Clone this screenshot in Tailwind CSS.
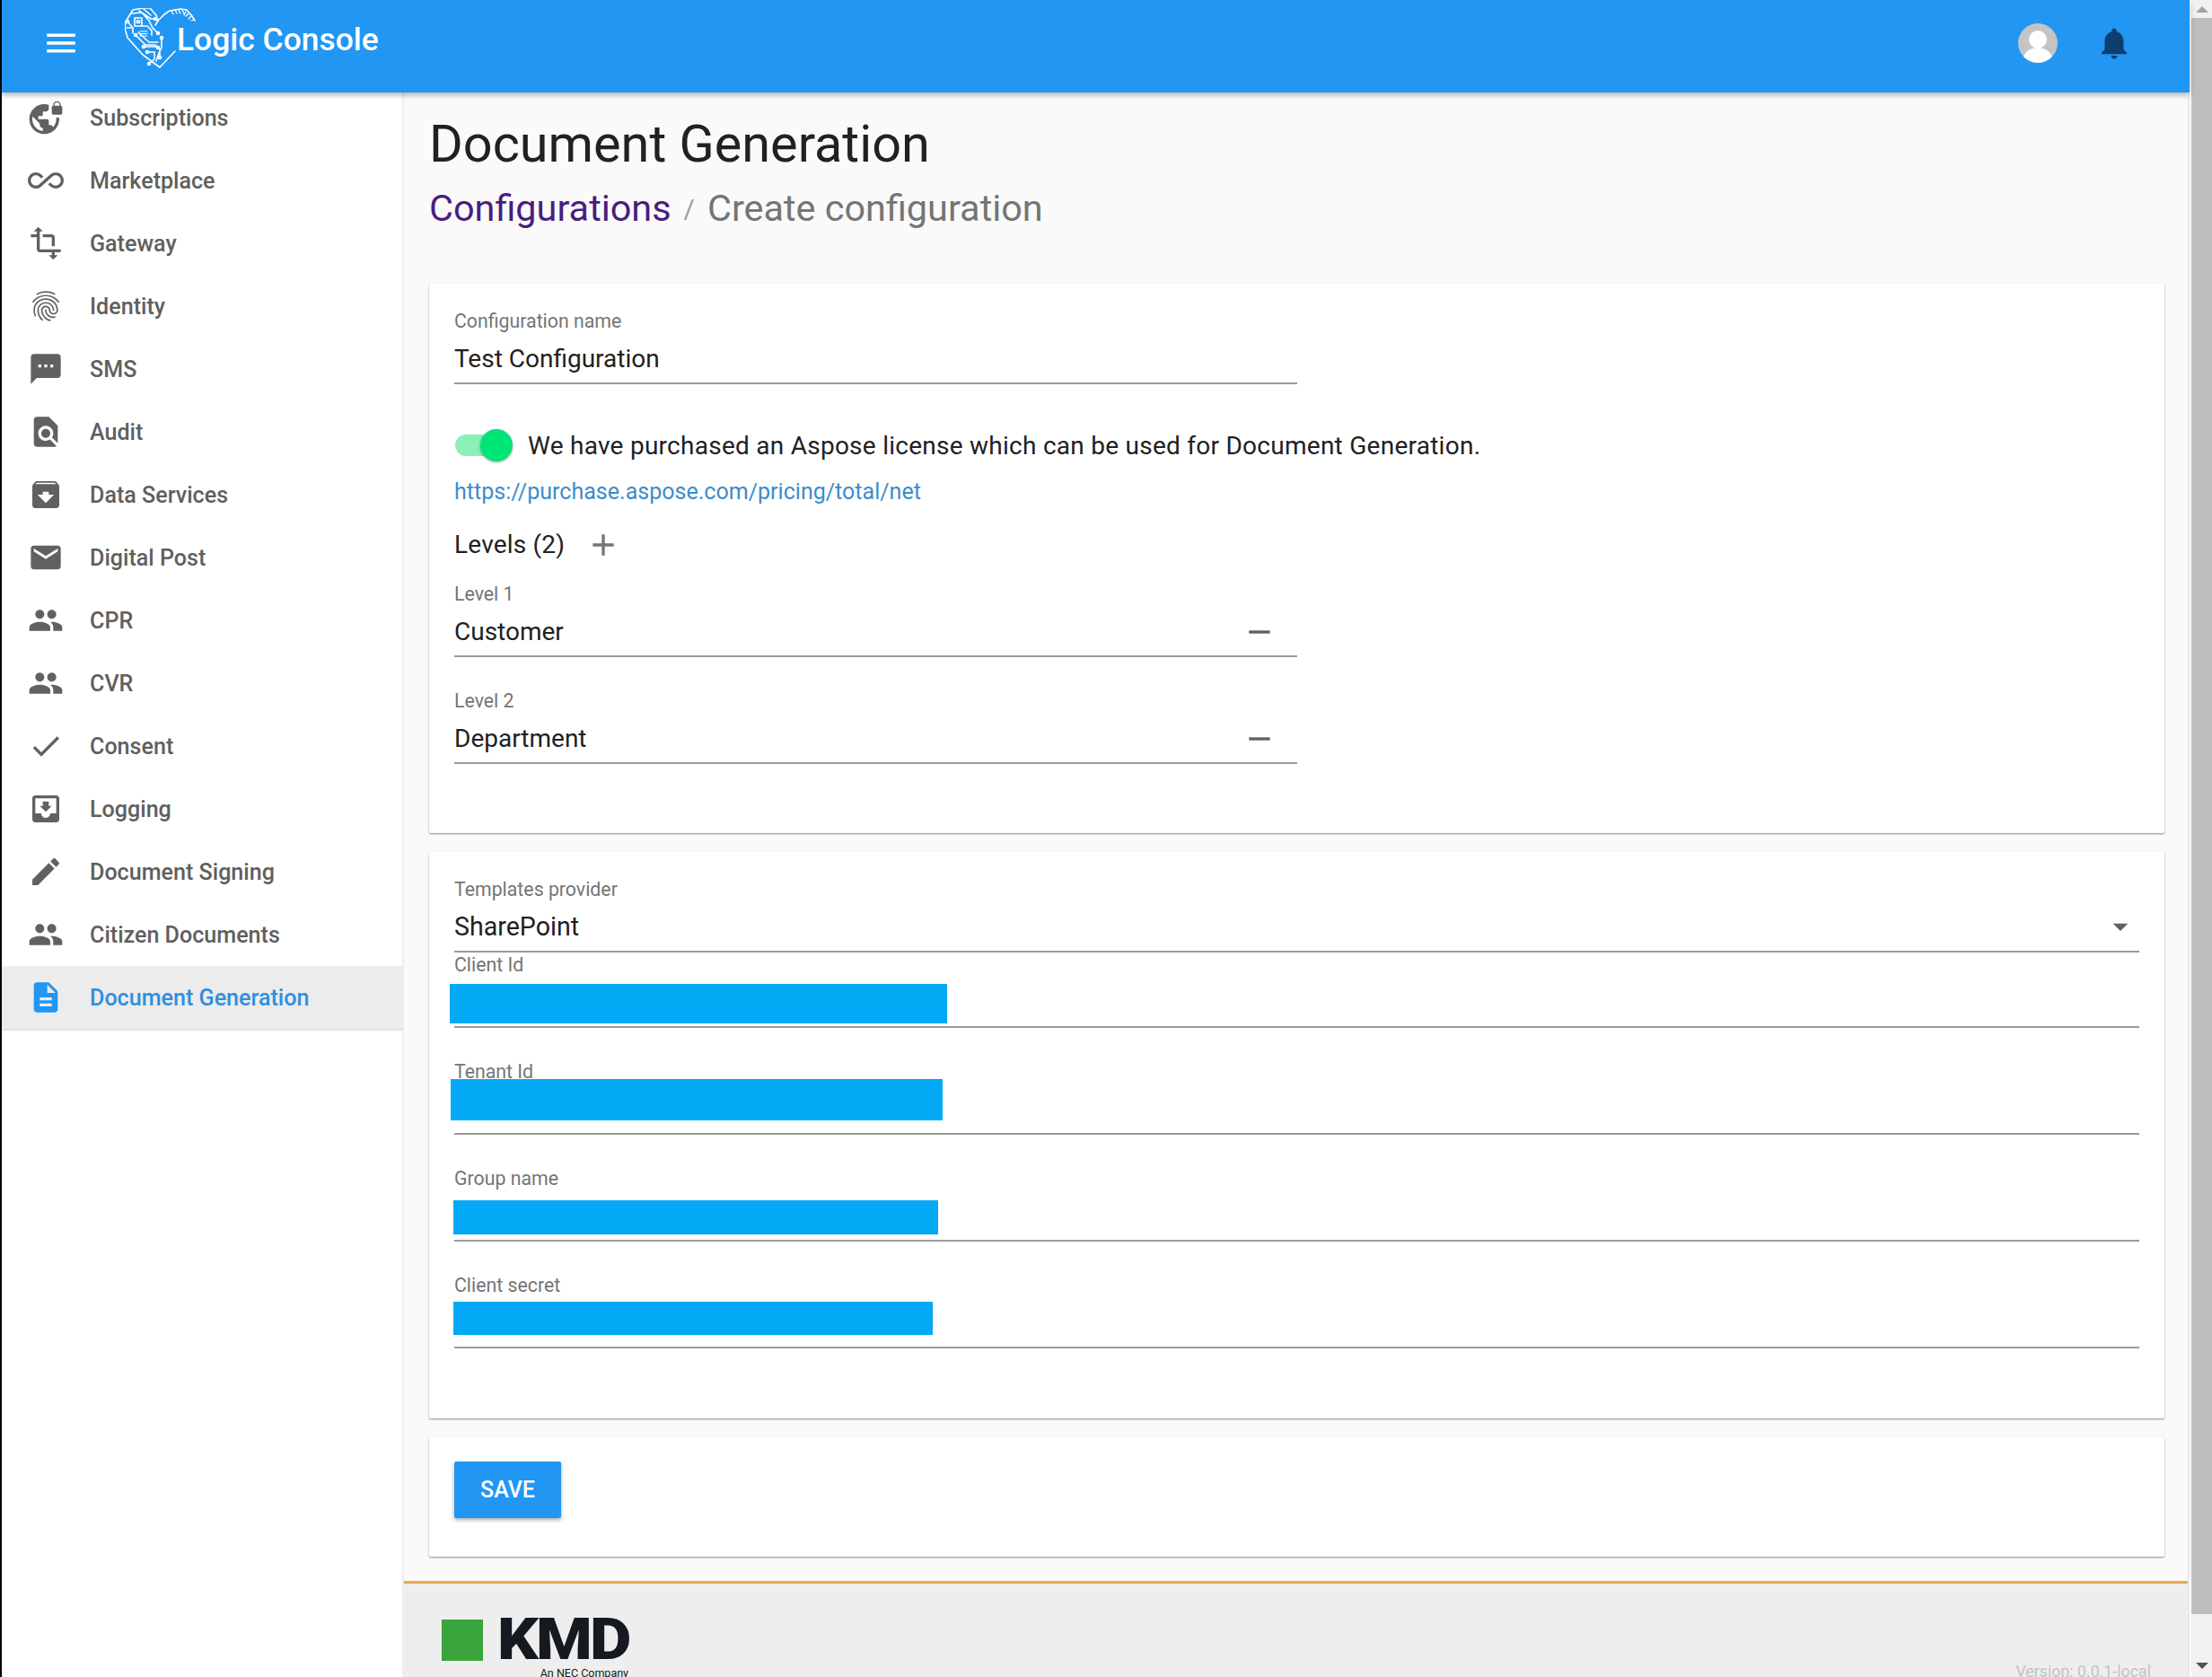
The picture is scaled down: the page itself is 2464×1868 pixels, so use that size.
<!DOCTYPE html>
<html lang="en">
<head>
  <meta charset="UTF-8" />
  <title>Logic Console</title>
  <script src="https://cdn.jsdelivr.net/npm/@tailwindcss/browser@4"></script>
</head>
<body class="font-['Roboto',sans-serif] bg-white">
<div class="flex h-[1868px] w-[2464px] overflow-hidden">
  <div class="w-[2px] shrink-0 bg-black"></div>

  <div class="w-[2437px] shrink-0 flex flex-col">
    <!-- Top bar -->
    <header class="relative z-10 h-[103px] shrink-0 pb-[8px] bg-[#2196f3] shadow-[0_3px_6px_rgba(0,0,0,0.3)] flex items-center">
      <svg class="w-[42px] h-[42px] ml-[45px] fill-white" viewBox="0 0 24 24"><path d="M3 18h18v-2H3v2zm0-5h18v-2H3v2zm0-7v2h18V6H3z"/></svg>
      <svg class="w-[80px] h-[68px] ml-[50px] -mt-[9px] shrink-0" viewBox="0 0 80 68" fill="none" stroke="white" stroke-width="1.6" stroke-linecap="round" stroke-linejoin="round">
        <path d="M39 66L20 52 3 33 0 22 1 15 9 2 20 0 28 0 35 8 37 14 34 19"/>
        <path d="M36 15L44 7 50 3 62 1 69 2 75 9 78 14"/>
        <path d="M39 66L56 48"/>
        <path d="M52 3l2 4M56 2l2 4M60 2l2 4M64 2l2 4M68 4l-2 4M71 6l-3 3M74 9l-3 3M77 13l-3 1" stroke-width="1.2"/>
        <path d="M11 11h8v9h-8zM13.5 14h3v2.5h-3z"/>
        <path d="M16 3l13 9h5M21 1l8 7M7 6l12-1 8 9 4 8 6 6"/>
        <path d="M3 15l6 7 0 6M2 22h5M19 20l6 0 5 5 0 5"/>
        <path d="M17 26h8M17 28.500h8M17 31h8" stroke-width="1.2"/>
        <path d="M12 30l11 11h11l3 3M15 27l12 11h10M21 43l15 0 3 3 0 9M25 49l8 0 0 8-6 5M41 33l0 11-3 6 -3 9"/>
        <circle cx="34" cy="12" r="1.5"/><circle cx="3" cy="15" r="1.500"/><circle cx="37" cy="28" r="1.500"/><circle cx="12" cy="30" r="1.500"/><circle cx="41" cy="33" r="1.500"/><circle cx="37" cy="44" r="1.500"/><circle cx="21" cy="43" r="1.500"/><circle cx="39" cy="55" r="1.500"/><circle cx="25" cy="49" r="1.500"/><circle cx="27" cy="62" r="1.500"/>
      </svg>
      <span class="-ml-[22px] -mt-[5px] text-[35.4px] font-medium text-white whitespace-nowrap">Logic Console</span>
      <div class="ml-auto mr-[63px] flex items-center gap-[42px]">
        <svg class="w-[44px] h-[44px]" viewBox="0 0 44 44"><defs><clipPath id="avatarClip"><circle cx="22" cy="22" r="22"/></clipPath></defs><circle cx="22" cy="22" r="22" fill="#c4c4c4"/><g clip-path="url(#avatarClip)" fill="white"><circle cx="22" cy="18" r="10"/><ellipse cx="22" cy="40" rx="16" ry="13"/></g></svg>
        <svg class="w-[42px] h-[42px] fill-[#0c3f70]" viewBox="0 0 24 24"><path d="M12 22c1.1 0 2-.9 2-2h-4c0 1.1.89 2 2 2zm6-6v-5c0-3.07-1.64-5.64-4.500-6.320V4c0-.83-.67-1.500-1.500-1.500s-1.500.67-1.500 1.500v.68C7.630 5.360 6 7.920 6 11v5l-2 2v1h16v-1l-2-2z"/></svg>
      </div>
    </header>

    <div class="flex flex-1 min-h-0">
      <!-- Sidebar -->
      <nav class="w-[448px] shrink-0 -mt-[7px] bg-white border-r-[2px] border-[#eeeeee] text-[25.1px] leading-[32px] font-medium text-[#5f5f5f]">
        <a class="h-[70px] flex items-center"><svg class="w-[40px] h-[40px] mx-[29px] fill-[#616161]" viewBox="0 0 24 24"><path d="M22 4v-.5C22 2.12 20.88 1 19.5 1S17 2.12 17 3.5V4c-.55 0-1 .45-1 1v4c0 .55.45 1 1 1h5c.55 0 1-.45 1-1V5c0-.55-.45-1-1-1zm-.8 0h-3.4v-.5c0-.94.76-1.7 1.7-1.7s1.7.76 1.7 1.7V4zm-2.28 8c.04.33.08.66.08 1 0 2.08-.8 3.97-2.1 5.39-.26-.81-1-1.39-1.9-1.39h-1v-3c0-.55-.45-1-1-1H7v-2h2c.55 0 1-.45 1-1V8h2c1.1 0 2-.9 2-2V3.46c-.95-.3-1.95-.46-3-.46C5.48 3 1 7.48 1 13s4.48 10 10 10 10-4.48 10-10c0-.34-.02-.67-.05-1h-2.03zM10 20.93c-3.95-.49-7-3.85-7-7.93 0-.62.08-1.21.21-1.79L8 16v1c0 1.1.9 2 2 2v1.93z"/></svg><span class="pt-[1px]">Subscriptions</span></a>
        <a class="h-[70px] flex items-center"><svg class="w-[40px] h-[40px] mx-[29px] fill-[#616161]" viewBox="0 0 24 24"><path d="M18.6 6.62c-1.44 0-2.8.56-3.77 1.53L12 10.66 10.48 12h.01L7.8 14.39c-.64.64-1.49.99-2.4.99-1.87 0-3.39-1.51-3.39-3.38S3.53 8.62 5.4 8.62c.91 0 1.76.35 2.44 1.03l1.13 1 1.51-1.34L9.22 8.2C8.2 7.18 6.84 6.62 5.4 6.62 2.42 6.62 0 9.04 0 12s2.42 5.38 5.4 5.38c1.44 0 2.8-.56 3.77-1.53l2.83-2.5.01.01L13.52 12h-.01l2.69-2.39c.64-.64 1.49-.99 2.4-.99 1.87 0 3.39 1.51 3.39 3.38s-1.52 3.38-3.39 3.38c-.9 0-1.76-.35-2.44-1.03l-1.14-1.01-1.51 1.34 1.27 1.12c1.02 1.01 2.37 1.57 3.82 1.57 2.98 0 5.4-2.41 5.4-5.38s-2.42-5.37-5.4-5.37z"/></svg><span class="pt-[1px]">Marketplace</span></a>
        <a class="h-[70px] flex items-center"><svg class="w-[40px] h-[40px] mx-[29px] fill-[#616161]" viewBox="0 0 24 24"><path d="M22 18v-2H8V4h2L7 1 4 4h2v2H2v2h4v8c0 1.1.9 2 2 2h8v2h-2l3 3 3-3h-2v-2h4zM10 8h6v6h2V8c0-1.1-.9-2-2-2h-6v2z"/></svg><span class="pt-[1px]">Gateway</span></a>
        <a class="h-[70px] flex items-center"><svg class="w-[40px] h-[40px] mx-[29px] fill-[#616161]" viewBox="0 0 24 24"><path d="M17.81 4.47c-.08 0-.16-.02-.23-.06C15.66 3.42 14 3 12.01 3c-1.98 0-3.86.47-5.57 1.41-.24.13-.54.04-.68-.2-.13-.24-.04-.55.2-.68C7.82 2.52 9.86 2 12.01 2c2.13 0 3.99.47 6.03 1.52.25.13.34.43.21.67-.09.18-.26.28-.44.28zM3.5 9.72c-.1 0-.2-.03-.29-.09-.23-.16-.28-.47-.12-.7.99-1.4 2.25-2.5 3.75-3.27C9.98 4.04 14 4.03 17.15 5.65c1.5.77 2.76 1.86 3.75 3.25.16.22.11.54-.12.7-.23.16-.54.11-.7-.12-.9-1.26-2.04-2.25-3.39-2.94-2.87-1.47-6.54-1.47-9.4.01-1.36.7-2.5 1.7-3.4 2.96-.08.14-.23.21-.39.21zm6.25 12.07c-.13 0-.26-.05-.35-.15-.87-.87-1.34-1.43-2.01-2.64-.69-1.23-1.05-2.73-1.05-4.34 0-2.97 2.54-5.39 5.66-5.39s5.66 2.42 5.66 5.39c0 .28-.22.5-.5.5s-.5-.22-.5-.5c0-2.42-2.09-4.39-4.66-4.39-2.57 0-4.66 1.97-4.66 4.39 0 1.44.32 2.77.93 3.85.64 1.15 1.08 1.64 1.85 2.42.19.2.19.51 0 .71-.11.1-.24.15-.37.15zm7.17-1.85c-1.19 0-2.24-.3-3.1-.89-1.49-1.01-2.38-2.65-2.38-4.39 0-.28.22-.5.5-.5s.5.22.5.5c0 1.41.72 2.74 1.94 3.56.71.48 1.54.71 2.54.71.24 0 .64-.03 1.04-.1.27-.05.53.13.58.41.05.27-.13.53-.41.58-.57.11-1.07.12-1.21.12zM14.91 22c-.04 0-.09-.01-.13-.02-1.59-.44-2.63-1.03-3.72-2.1-1.4-1.39-2.17-3.24-2.17-5.22 0-1.62 1.38-2.94 3.08-2.94 1.7 0 3.08 1.32 3.08 2.94 0 1.07.93 1.94 2.08 1.94s2.08-.87 2.08-1.94c0-3.77-3.25-6.83-7.25-6.83-2.84 0-5.44 1.58-6.61 4.03-.39.81-.59 1.76-.59 2.8 0 .78.07 2.01.67 3.61.1.26-.03.55-.29.64-.26.1-.55-.04-.64-.29-.49-1.31-.73-2.61-.73-3.96 0-1.2.23-2.29.68-3.24 1.33-2.79 4.28-4.6 7.51-4.6 4.55 0 8.25 3.51 8.25 7.83 0 1.62-1.38 2.94-3.08 2.94s-3.08-1.32-3.08-2.94c0-1.07-.93-1.94-2.08-1.94s-2.08.87-2.08 1.94c0 1.71.66 3.31 1.87 4.51.95.94 1.86 1.46 3.27 1.85.27.07.42.35.35.61-.05.23-.26.38-.47.38z"/></svg><span class="pt-[1px]">Identity</span></a>
        <a class="h-[70px] flex items-center"><svg class="w-[40px] h-[40px] mx-[29px] fill-[#616161]" viewBox="0 0 24 24"><path d="M20 2H4c-1.1 0-1.99.9-1.99 2L2 22l4-4h14c1.1 0 2-.9 2-2V4c0-1.1-.9-2-2-2zM9 11H7V9h2v2zm4 0h-2V9h2v2zm4 0h-2V9h2v2z"/></svg><span class="pt-[1px]">SMS</span></a>
        <a class="h-[70px] flex items-center"><svg class="w-[40px] h-[40px] mx-[29px] fill-[#616161]" viewBox="0 0 24 24"><path d="M20 19.59V8l-6-6H6c-1.1 0-1.99.9-1.99 2L4 20c0 1.1.89 2 1.99 2H18c.45 0 .85-.15 1.19-.4l-4.43-4.43c-.8.52-1.74.83-2.76.83-2.76 0-5-2.24-5-5s2.24-5 5-5 5 2.24 5 5c0 1.02-.31 1.96-.83 2.75L20 19.59zM9 13c0 1.66 1.34 3 3 3s3-1.34 3-3-1.34-3-3-3-3 1.34-3 3z"/></svg><span class="pt-[1px]">Audit</span></a>
        <a class="h-[70px] flex items-center"><svg class="w-[40px] h-[40px] mx-[29px] fill-[#616161]" viewBox="0 0 24 24"><path d="M20.54 5.23l-1.39-1.68C18.88 3.21 18.47 3 18 3H6c-.47 0-.88.21-1.16.55L3.46 5.23C3.17 5.57 3 6.02 3 6.5V19c0 1.1.9 2 2 2h14c1.1 0 2-.9 2-2V6.5c0-.48-.17-.93-.46-1.27zM12 17.5L6.5 12H10v-2h4v2h3.5L12 17.5zM5.12 5l.81-1h12l.94 1H5.12z"/></svg><span class="pt-[1px]">Data Services</span></a>
        <a class="h-[70px] flex items-center"><svg class="w-[40px] h-[40px] mx-[29px] fill-[#616161]" viewBox="0 0 24 24"><path d="M20 4H4c-1.1 0-1.99.9-1.99 2L2 18c0 1.1.9 2 2 2h16c1.1 0 2-.9 2-2V6c0-1.1-.9-2-2-2zm0 4l-8 5-8-5V6l8 5 8-5v2z"/></svg><span class="pt-[1px]">Digital Post</span></a>
        <a class="h-[70px] flex items-center"><svg class="w-[40px] h-[40px] mx-[29px] fill-[#616161]" viewBox="0 0 24 24"><path d="M16 11c1.66 0 2.99-1.34 2.99-3S17.66 5 16 5c-1.66 0-3 1.34-3 3s1.34 3 3 3zm-8 0c1.66 0 2.99-1.34 2.99-3S9.66 5 8 5C6.34 5 5 6.34 5 8s1.34 3 3 3zm0 2c-2.33 0-7 1.17-7 3.5V19h14v-2.5c0-2.33-4.67-3.5-7-3.5zm8 0c-.29 0-.62.02-.97.05 1.16.84 1.97 1.97 1.97 3.45V19h6v-2.5c0-2.33-4.67-3.5-7-3.5z"/></svg><span class="pt-[1px]">CPR</span></a>
        <a class="h-[70px] flex items-center"><svg class="w-[40px] h-[40px] mx-[29px] fill-[#616161]" viewBox="0 0 24 24"><path d="M16 11c1.66 0 2.99-1.34 2.99-3S17.66 5 16 5c-1.66 0-3 1.34-3 3s1.34 3 3 3zm-8 0c1.66 0 2.99-1.34 2.99-3S9.66 5 8 5C6.34 5 5 6.34 5 8s1.34 3 3 3zm0 2c-2.33 0-7 1.17-7 3.5V19h14v-2.5c0-2.33-4.67-3.5-7-3.5zm8 0c-.29 0-.62.02-.97.05 1.16.84 1.97 1.97 1.97 3.45V19h6v-2.5c0-2.33-4.67-3.5-7-3.5z"/></svg><span class="pt-[1px]">CVR</span></a>
        <a class="h-[70px] flex items-center"><svg class="w-[40px] h-[40px] mx-[29px] fill-[#616161]" viewBox="0 0 24 24"><path d="M9 16.17L4.83 12l-1.42 1.41L9 19 21 7l-1.41-1.41z"/></svg><span class="pt-[1px]">Consent</span></a>
        <a class="h-[70px] flex items-center"><svg class="w-[40px] h-[40px] mx-[29px] fill-[#616161]" viewBox="0 0 24 24"><path d="M19 3H4.99c-1.11 0-1.98.89-1.98 2L3 19c0 1.1.88 2 1.99 2H19c1.1 0 2-.9 2-2V5c0-1.11-.9-2-2-2zm0 12h-4c0 1.66-1.35 3-3 3s-3-1.34-3-3H4.99V5H19v10zm-3-5h-2V7h-4v3H8l4 4 4-4z"/></svg><span class="pt-[1px]">Logging</span></a>
        <a class="h-[70px] flex items-center"><svg class="w-[40px] h-[40px] mx-[29px] fill-[#616161]" viewBox="0 0 24 24"><path d="M3 17.25V21h3.75L17.81 9.94l-3.75-3.75L3 17.25zM20.71 7.04c.39-.39.39-1.02 0-1.41l-2.34-2.34c-.39-.39-1.02-.39-1.41 0l-1.83 1.83 3.75 3.75 1.83-1.83z"/></svg><span class="pt-[1px]">Document Signing</span></a>
        <a class="h-[70px] flex items-center"><svg class="w-[40px] h-[40px] mx-[29px] fill-[#616161]" viewBox="0 0 24 24"><path d="M16 11c1.66 0 2.99-1.34 2.99-3S17.66 5 16 5c-1.66 0-3 1.34-3 3s1.34 3 3 3zm-8 0c1.66 0 2.99-1.34 2.99-3S9.66 5 8 5C6.34 5 5 6.34 5 8s1.34 3 3 3zm0 2c-2.33 0-7 1.17-7 3.5V19h14v-2.5c0-2.33-4.67-3.5-7-3.5zm8 0c-.29 0-.62.02-.97.05 1.16.84 1.97 1.97 1.97 3.45V19h6v-2.5c0-2.33-4.67-3.5-7-3.5z"/></svg><span class="pt-[1px]">Citizen Documents</span></a>
        <a class="h-[72px] flex items-center bg-[#ececec] border-b-[2px] border-[#e2e2e2] text-[#2f8fe0]"><svg class="w-[40px] h-[40px] mx-[29px] fill-[#2196f3]" viewBox="0 0 24 24"><path d="M14 2H6c-1.1 0-1.99.9-1.99 2L4 20c0 1.1.89 2 1.99 2H18c1.1 0 2-.9 2-2V8l-6-6zm2 16H8v-2h8v2zm0-4H8v-2h8v2zm-3-5V3.5L18.5 9H13z"/></svg><span class="pt-[1px]">Document Generation</span></a>
      </nav>

      <!-- Main column -->
      <main class="flex-1 min-w-0 bg-[#fafafa] border-r-[2px] border-[#e8e8e8] flex flex-col">
        <div class="pl-[28px] pr-[26px] pt-[23px]">
          <h1 class="h-[70px] text-[57.6px] leading-[70px] text-[#212121]">Document Generation</h1>
          <div class="mt-[11px] mb-[59px] h-[50px] flex items-center text-[41.4px] text-[#757575]">
            <a class="text-[#4a1d7e]">Configurations</a>
            <span class="mx-[14px] text-[30px] text-[#9e9e9e]">/</span>
            <span>Create configuration</span>
          </div>

          <!-- Card 1 -->
          <section class="h-[612px] bg-white rounded-[2px] shadow-[0_1px_2px_rgba(0,0,0,0.45)] pl-[28px] pt-[30px] text-[#212121]">
            <div class="w-[939px] h-[82px] border-b-[2px] border-[#9a9a9a]">
              <div class="h-[24px] leading-[24px] text-[21.3px] text-[#757575]">Configuration name</div>
              <div class="h-[56px] pt-[2px] leading-[56px] text-[28px]">Test Configuration</div>
            </div>
            <div class="mt-[48px] h-[40px] flex items-center">
              <div class="relative ml-[1px] w-[64px] h-[40px] shrink-0">
                <div class="absolute left-0 top-[8px] w-[56px] h-[24px] rounded-full bg-[#8af0b8]"></div>
                <div class="absolute right-0 top-[2px] w-[36px] h-[36px] rounded-full bg-[#00e676] shadow-[0_1px_3px_rgba(0,0,0,0.35)]"></div>
              </div>
              <span class="ml-[17px] pt-[1px] text-[28px] tracking-[0.26px]">We have purchased an Aspose license which can be used for Document Generation.</span>
            </div>
            <a class="block mt-[14px] h-[36px] leading-[36px] text-[25.050px] text-[#3d8ccb]">https://purchase.aspose.com/pricing/total/net</a>
            <div class="mt-[21px] h-[40px] flex items-center text-[28px]">
              <span class="tracking-[0.2px]">Levels (2)</span>
              <svg class="w-[40px] h-[40px] ml-[23px] fill-[#757575]" viewBox="0 0 24 24"><path d="M19 13h-6v6h-2v-6H5v-2h6V5h2v6h6v2z"/></svg>
            </div>
            <div class="mt-[23px] w-[939px] h-[82px] border-b-[2px] border-[#9a9a9a]">
              <div class="h-[24px] leading-[24px] text-[21.3px] text-[#757575]">Level 1</div>
              <div class="h-[56px] pt-[3px] flex items-center justify-between text-[28px]">
                <span>Customer</span>
                <svg class="w-[40px] h-[40px] mr-[22px] fill-[#616161]" viewBox="0 0 24 24"><path d="M19 13H5v-2h14v2z"/></svg>
              </div>
            </div>
            <div class="mt-[37px] w-[939px] h-[82px] border-b-[2px] border-[#9a9a9a]">
              <div class="h-[24px] leading-[24px] text-[21.3px] text-[#757575]">Level 2</div>
              <div class="h-[56px] pt-[3px] flex items-center justify-between text-[28px]">
                <span>Department</span>
                <svg class="w-[40px] h-[40px] mr-[22px] fill-[#616161]" viewBox="0 0 24 24"><path d="M19 13H5v-2h14v2z"/></svg>
              </div>
            </div>
          </section>

          <!-- Card 2 -->
          <section class="mt-[21px] h-[631px] bg-white rounded-[2px] shadow-[0_1px_2px_rgba(0,0,0,0.45)] pl-[28px] pr-[28px] pt-[30px] text-[#212121]">
            <div class="h-[82px] border-b-[2px] border-[#9a9a9a]">
              <div class="h-[24px] leading-[24px] text-[21.3px] text-[#757575]">Templates provider</div>
              <div class="h-[56px] pt-[2px] flex items-center justify-between text-[28.6px]">
                <span>SharePoint</span>
                <svg class="w-[40px] h-[40px] mr-[1px] fill-[#616161]" viewBox="0 0 24 24"><path d="M7 10l5 5 5-5z"/></svg>
              </div>
            </div>
            <div class="relative mt-[2px] h-[82px] border-b-[2px] border-[#9a9a9a]">
              <div class="h-[24px] leading-[24px] text-[21.3px] text-[#757575]">Client Id</div>
              <div class="absolute -left-[5px] top-[33px] w-[554px] h-[44px] bg-[#03a9f4]"></div>
            </div>
            <div class="relative mt-[37px] h-[82px] border-b-[2px] border-[#9a9a9a]">
              <div class="h-[24px] leading-[24px] text-[21.3px] text-[#757575]">Tenant Id</div>
              <div class="absolute -left-[4px] top-[20px] w-[548px] h-[46px] bg-[#03a9f4]"></div>
            </div>
            <div class="relative mt-[37px] h-[82px] border-b-[2px] border-[#9a9a9a]">
              <div class="h-[24px] leading-[24px] text-[21.3px] text-[#757575]">Group name</div>
              <div class="absolute -left-[1px] top-[36px] w-[540px] h-[38px] bg-[#03a9f4]"></div>
            </div>
            <div class="relative mt-[37px] h-[82px] border-b-[2px] border-[#9a9a9a]">
              <div class="h-[24px] leading-[24px] text-[21.3px] text-[#757575]">Client secret</div>
              <div class="absolute -left-[1px] top-[30px] w-[534px] h-[37px] bg-[#03a9f4]"></div>
            </div>
          </section>

          <!-- Card 3 -->
          <section class="mt-[21px] h-[133px] bg-white rounded-[2px] shadow-[0_1px_2px_rgba(0,0,0,0.45)] pl-[28px] pt-[27px]">
            <button class="w-[119px] h-[63px] bg-[#2196f3] rounded-[2px] text-white text-[25px] font-medium shadow-[0_2px_4px_rgba(0,0,0,0.35)]">SAVE</button>
          </section>
        </div>

        <!-- Footer -->
        <footer class="mt-[27px] flex-1 bg-[#eeeeee] border-t-[3px] border-[#e8a94a] pl-[42px] pr-[41px] pt-[40px] flex justify-between">
          <div class="flex items-start">
            <div class="w-[46px] h-[46px] bg-[#3aa53c]"></div>
            <div class="ml-[16px] relative w-[146px]">
              <div class="h-[46px] leading-[46px] text-[64px] font-black tracking-[-2.500px] origin-left scale-x-[1.12] text-[#141a20]">KMD</div>
              <div class="absolute right-0 top-[52px] text-[12.5px] leading-[16px] whitespace-nowrap text-[#141a20]">An NEC Company</div>
            </div>
          </div>
          <div class="pt-[46px] text-[17.8px] leading-[24px] text-[#c4c4c4]">Version: 0.0.1-local</div>
        </footer>
      </main>
    </div>
  </div>

  <!-- Scrollbar -->
  <div class="w-[2px] shrink-0 bg-white"></div>
  <div class="w-[23px] shrink-0 bg-[#f1f1f1] flex flex-col">
    <div class="h-[20px] flex items-center justify-center"><div class="w-0 h-0 border-x-[7px] border-x-transparent border-b-[7px] border-b-[#a3a3a3]"></div></div>
    <div class="h-[1778px] bg-[#bdbdbd]"></div>
    <div class="flex-1 flex items-end justify-center pb-[9px]"><div class="w-0 h-0 border-x-[7px] border-x-transparent border-t-[7px] border-t-[#505050]"></div></div>
  </div>
</div>
</body>
</html>
